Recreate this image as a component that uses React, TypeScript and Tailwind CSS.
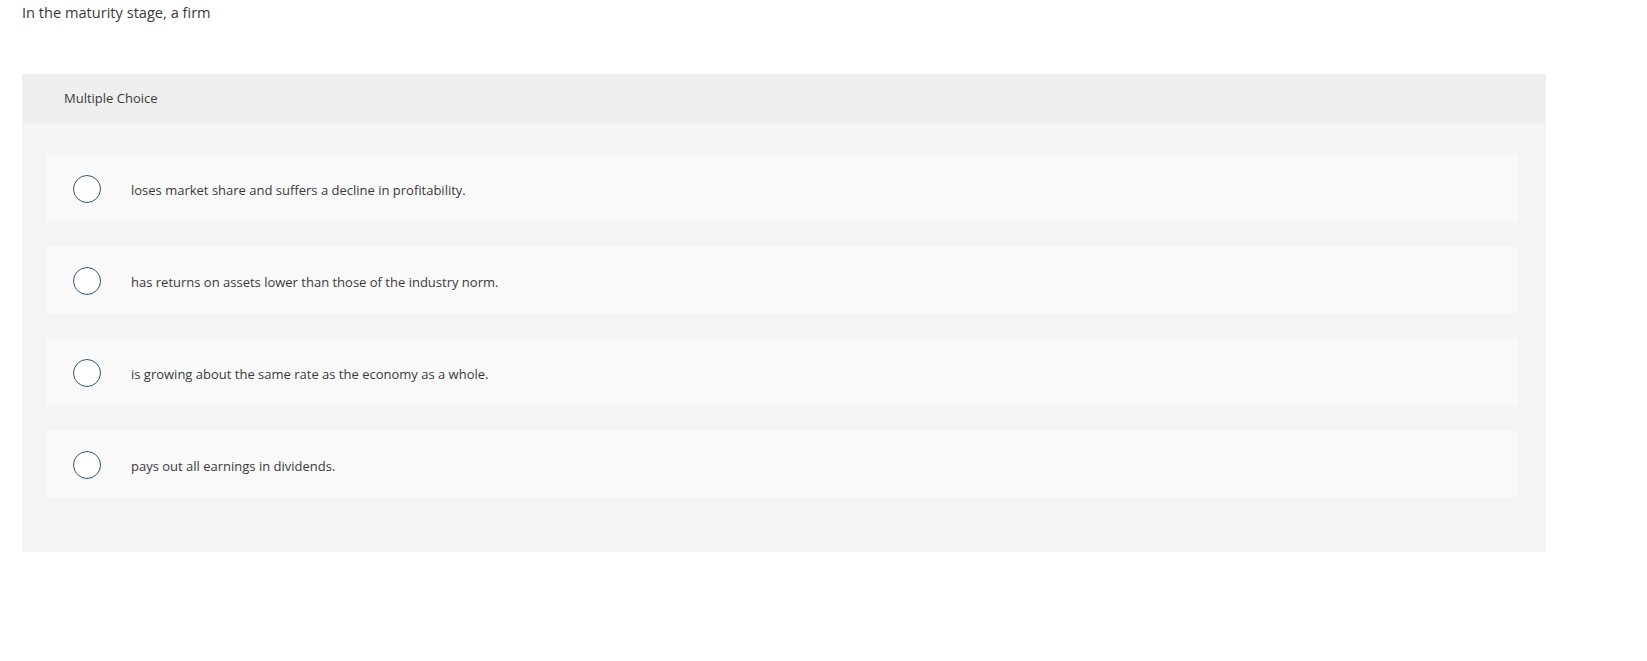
const options = [
  'loses market share and suffers a decline in profitability.',
  'has returns on assets lower than those of the industry norm.',
  'is growing about the same rate as the economy as a whole.',
  'pays out all earnings in dividends.',
]

function Radio() {
  return <span className="block w-[28px] h-[28px] shrink-0 rounded-full border-[1.5px] border-[#34556d] bg-white" />
}

export default function App() {
  return (
    <div className="min-h-[661px] bg-white font-['Open_Sans',sans-serif] text-[#3a3a3a]">
      <div className="pl-[22px] pt-[2px] h-[74px]">
        <p className="text-[14.6px] leading-[20px]">In the maturity stage, a firm</p>
      </div>
      <div className="ml-[22px] w-[1524px] bg-[#f4f4f4]">
        <div className="h-[50px] bg-[#efefef] pl-[42px] flex items-center">
          <span className="text-[13px]">Multiple Choice</span>
        </div>
        <div className="pt-[31px] pb-[55px] pl-[24px] pr-[28px] flex flex-col gap-[26px]">
          {options.map((o) => (
            <label key={o} className="h-[66px] bg-[#f9f9f9] flex items-center pl-[27px] pt-[1px] cursor-pointer">
              <Radio />
              <span className="ml-[30px] text-[13px] leading-[18px] pt-[2px]">{o}</span>
            </label>
          ))}
        </div>
      </div>
    </div>
  )
}
